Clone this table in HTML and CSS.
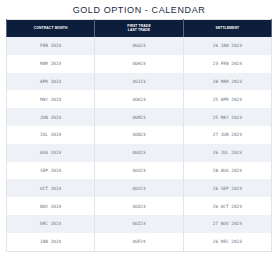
FILE: index.html
```html
<!DOCTYPE html>
<html>
<head>
<meta charset="utf-8">
<link rel="stylesheet" href="styles.css">
</head>
<body>
<div class="page">
  <h1 class="title">GOLD OPTION - CALENDAR</h1>
  <table class="cal">
    <thead>
      <tr>
        <th>CONTRACT MONTH</th>
        <th>FIRST TRADE<br>LAST TRADE</th>
        <th>SETTLEMENT</th>
      </tr>
    </thead>
    <tbody>
      <tr><td>FEB 2023</td><td>OGG23</td><td>26 JAN 2023</td></tr>
      <tr><td>MAR 2023</td><td>OGH23</td><td>23 FEB 2023</td></tr>
      <tr><td>APR 2023</td><td>OGJ23</td><td>28 MAR 2023</td></tr>
      <tr><td>MAY 2023</td><td>OGK23</td><td>25 APR 2023</td></tr>
      <tr><td>JUN 2023</td><td>OGM23</td><td>25 MAY 2023</td></tr>
      <tr><td>JUL 2023</td><td>OGN23</td><td>27 JUN 2023</td></tr>
      <tr><td>AUG 2023</td><td>OGQ23</td><td>26 JUL 2023</td></tr>
      <tr><td>SEP 2023</td><td>OGU23</td><td>28 AUG 2023</td></tr>
      <tr><td>OCT 2023</td><td>OGV23</td><td>26 SEP 2023</td></tr>
      <tr><td>NOV 2023</td><td>OGX23</td><td>26 OCT 2023</td></tr>
      <tr><td>DEC 2023</td><td>OGZ23</td><td>27 NOV 2023</td></tr>
      <tr><td>JAN 2024</td><td>OGF24</td><td>26 DEC 2023</td></tr>
    </tbody>
  </table>
</div>
</body>
</html>
```
FILE: styles.css
```css
html, body {
  margin: 0;
  padding: 0;
  background: #ffffff;
}
.page {
  padding: 4px 8px 0 6px;
}
.title {
  margin: 0 0 3px 0;
  height: 12px;
  line-height: 12px;
  text-align: center;
  font-family: "Liberation Sans", Arial, sans-serif;
  font-weight: normal;
  font-size: 9px;
  letter-spacing: 0.6px;
  color: #1b2a45;
}
.cal {
  width: 266px;
  border-collapse: collapse;
  table-layout: fixed;
  border: 1px solid #e1e5ea;
}
.cal th {
  background: #0d1e3c;
  color: #ffffff;
  font-family: "Liberation Sans", Arial, sans-serif;
  font-weight: bold;
  font-size: 3.4px;
  line-height: 3.6px;
  height: 17px;
  padding: 0;
  text-align: center;
  border-left: 1px solid #5a667a;
  border-right: 1px solid #5a667a;
  letter-spacing: 0.1px;
}
.cal td {
  font-family: "DejaVu Sans Mono", "Liberation Mono", monospace;
  font-size: 4.4px;
  color: #6c737d;
  text-align: center;
  height: 17.8px;
  padding: 0;
  border-left: 1px solid #e1e5ea;
  border-right: 1px solid #e1e5ea;
}
.cal tbody tr:nth-child(odd) td {
  background: #eef2f6;
}
.cal tbody tr:nth-child(even) td {
  background: #ffffff;
}
```
